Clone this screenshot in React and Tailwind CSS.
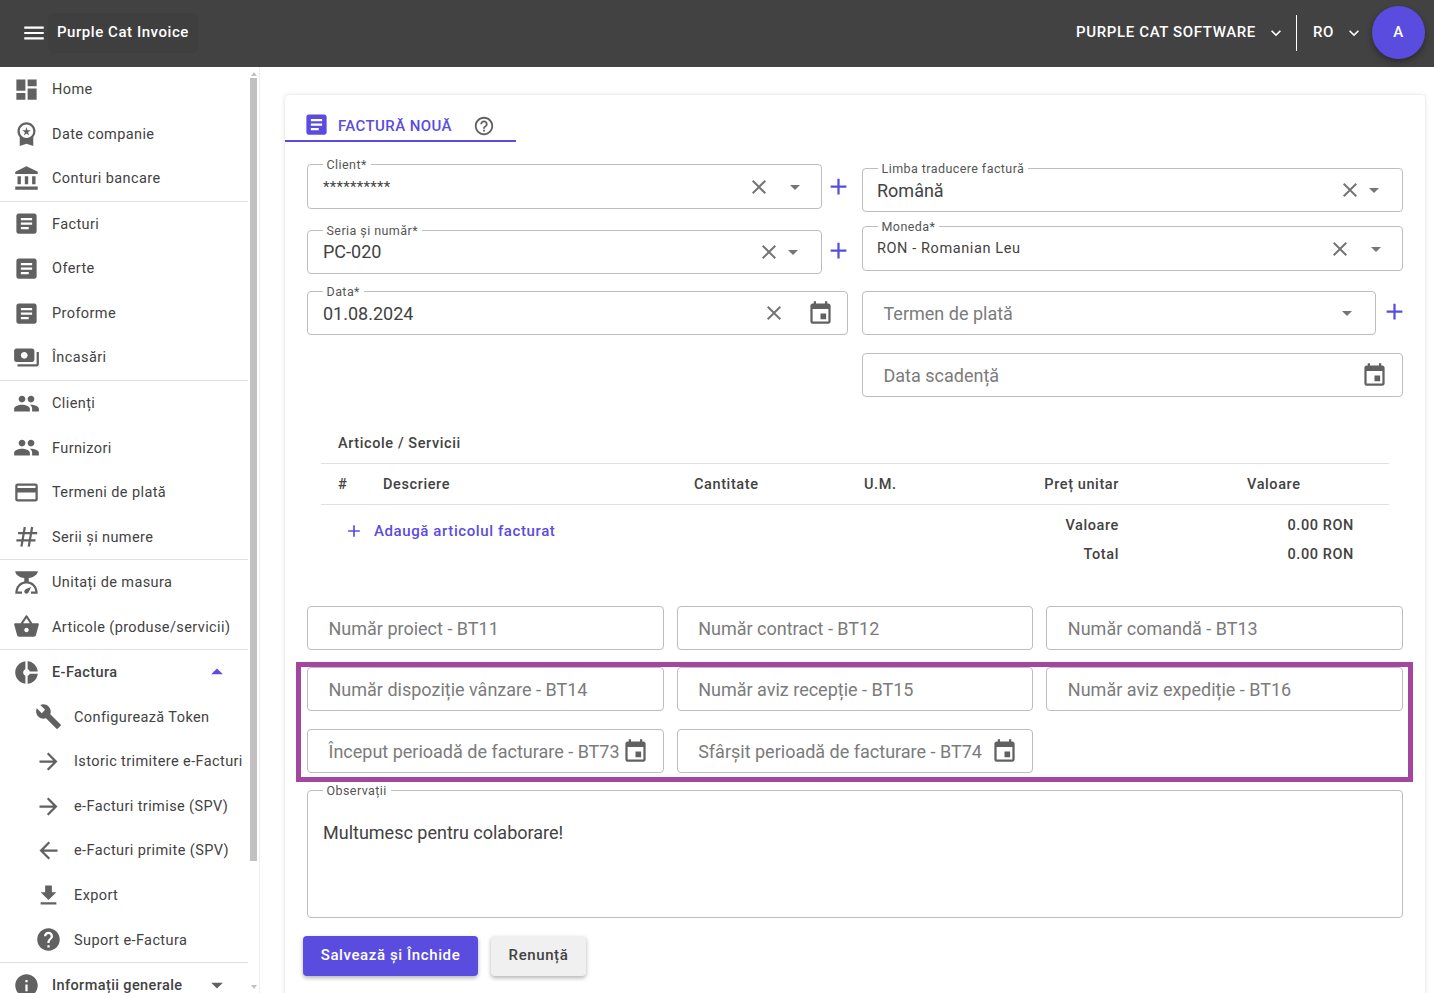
import React from 'react';
import {
  MdMenu, MdKeyboardArrowDown, MdDashboard, MdWorkspacePremium, MdAccountBalance, MdArticle, MdPayments,
  MdPeople, MdCreditCard, MdScale, MdShoppingBasket, MdDonutSmall, MdArrowDropUp, MdArrowDropDown,
  MdBuild, MdArrowForward, MdArrowBack, MdFileDownload, MdHelp, MdInfo, MdClose, MdAdd, MdEvent, MdHelpOutline,
} from 'react-icons/md';

// slanted, thin hash from the reference menu
const HashIcon = ({ size, className }) => (
  <svg width={size} height={size} viewBox="0 0 24 24" className={className} fill="none" stroke="currentColor" strokeWidth="2">
    <path d="M10.5 3.5L7.5 21M17 3.5L14 21M4.5 9H21.5M3 15.5H20" />
  </svg>
);

const MENU = [
  [
    { label: 'Home', Icon: MdDashboard },
    { label: 'Date companie', Icon: MdWorkspacePremium },
    { label: 'Conturi bancare', Icon: MdAccountBalance },
  ],
  [
    { label: 'Facturi', Icon: MdArticle },
    { label: 'Oferte', Icon: MdArticle },
    { label: 'Proforme', Icon: MdArticle },
    { label: 'Încasări', Icon: MdPayments },
  ],
  [
    { label: 'Clienți', Icon: MdPeople },
    { label: 'Furnizori', Icon: MdPeople },
    { label: 'Termeni de plată', Icon: MdCreditCard },
    { label: 'Serii și numere', Icon: HashIcon },
  ],
  [
    { label: 'Unitați de masura', Icon: MdScale },
    { label: 'Articole (produse/servicii)', Icon: MdShoppingBasket },
  ],
  [
    { label: 'E-Factura', Icon: MdDonutSmall, open: true },
    { label: 'Configurează Token', Icon: MdBuild, sub: true },
    { label: 'Istoric trimitere e-Facturi', Icon: MdArrowForward, sub: true },
    { label: 'e-Facturi trimise (SPV)', Icon: MdArrowForward, sub: true },
    { label: 'e-Facturi primite (SPV)', Icon: MdArrowBack, sub: true },
    { label: 'Export', Icon: MdFileDownload, sub: true },
    { label: 'Suport e-Factura', Icon: MdHelp, sub: true },
  ],
  [{ label: 'Informații generale', Icon: MdInfo, closed: true }],
];

const MenuRow = ({ item }) => {
  const { label, Icon, sub, open, closed } = item;
  return (
    <div className={`flex h-[44.55px] items-center ${sub ? 'pl-[35px]' : 'pl-[13px]'}`}>
      <Icon size={27} className="shrink-0 text-[#616161]" />
      <span className={`ml-[12px] mt-[1.6px] whitespace-nowrap text-[14.5px] tracking-[0.4px] text-[#424242] ${open || closed ? 'font-medium' : ''}`}>{label}</span>
      {open && <MdArrowDropUp size={28} className="ml-auto mr-[17px] text-[#5b4ce0]" />}
      {closed && <MdArrowDropDown size={28} className="ml-auto mr-[17px] text-[#616161]" />}
    </div>
  );
};

const Sidebar = () => (
  <aside className="flex w-[260px] shrink-0 overflow-hidden border-r border-[#eeeeee]">
    <nav className="w-[248px] shrink-0">
      {MENU.map((group, i) => (
        <div key={i} className={i < MENU.length - 1 ? 'border-b border-[#e0e0e0]' : ''}>
          {group.map(item => <MenuRow key={item.label} item={item} />)}
        </div>
      ))}
    </nav>
    <div className="flex w-[7px] ml-[2px] flex-col items-center">
      <div className="mt-[5px] h-0 w-0 border-x-[3px] border-b-[4px] border-x-transparent border-b-[#c1c1c1]" />
      <div className="mt-[2px] h-[783px] w-full bg-[#c1c1c1]" />
      <div className="mt-[124px] h-0 w-0 border-x-[3px] border-t-[4px] border-x-transparent border-t-[#c1c1c1]" />
    </div>
  </aside>
);

const FieldLabel = ({ children }) => (
  <span className="absolute -top-[7px] left-[14.5px] bg-white px-1 text-[12.5px] leading-[14px] tracking-[0.43px] text-[#555555]">{children}</span>
);

// outlined input, the label sits on top of the border
const Field = ({ label, value, valueClass = 'pl-[15px] text-[18px]', placeholder, className = '', children }) => (
  <div className={`relative flex h-[44px] items-center rounded border border-[#bdbdbd] ${className}`}>
    {label && <FieldLabel>{label}</FieldLabel>}
    {value && <span className={`text-[#424242] ${valueClass}`}>{value}</span>}
    {placeholder && <span className="whitespace-nowrap pl-[20.5px] text-[18px] text-[#7b7b7b]">{placeholder}</span>}
    {children}
  </div>
);

const Clear = ({ className = '' }) => <MdClose size={24} className={`shrink-0 text-[#757575] ${className}`} />;
const Drop = ({ className = '' }) => <MdArrowDropDown size={24} className={`shrink-0 text-[#757575] ${className}`} />;
const Cal = ({ className = '' }) => <MdEvent size={27} className={`shrink-0 text-[#616161] ${className}`} />;
const Plus = ({ className = '' }) => <MdAdd size={27} className={`shrink-0 text-[#5b4ce0] ${className}`} />;

const TopBar = () => (
  <header className="flex h-[67px] shrink-0 items-center bg-[#424242] pb-[2px] text-white">
    <MdMenu size={26} className="ml-[21px] shrink-0" />
    <div className="ml-[1px] flex h-[40px] w-[150px] items-center rounded-md bg-[#3f3f3f] pl-[9px] text-[15px] font-medium tracking-[0.55px]">Purple Cat Invoice</div>
    <div className="ml-auto flex items-center text-[15px] font-medium tracking-[0.63px]">
      <span>PURPLE CAT SOFTWARE</span>
      <MdKeyboardArrowDown size={20} className="ml-[10px]" />
      <div className="ml-[10px] h-[36px] w-px bg-white" />
      <span className="ml-[16px]">RO</span>
      <MdKeyboardArrowDown size={20} className="ml-[10px]" />
      <div className="mb-[1px] ml-[8px] mr-[9px] flex h-[53px] w-[53px] items-center justify-center rounded-full bg-[#5b4ce0] shadow-[0_3px_6px_rgba(0,0,0,0.35)]">A</div>
    </div>
  </header>
);

const FormHead = () => (
  <div className="flex gap-[14px] px-[22px] pt-[22px]">
    <div className="w-[541px] shrink-0">
      <div className="flex items-center">
        <Field label="Client*" value="**********" valueClass="mt-[2px] pl-[15px] text-[15px] tracking-[0.3px]" className="h-[45px] w-[515px] shrink-0">
          <Clear className="ml-auto" />
          <Drop className="ml-[12px] mr-[14px]" />
        </Field>
        <Plus className="mb-[1px] ml-[3px]" />
      </div>
      <div className="mt-[21px] flex items-center">
        <Field label="Seria și număr*" value="PC-020" valueClass="mb-[2px] pl-[15px] text-[18px]" className="w-[515px] shrink-0">
          <Clear className="ml-auto" />
          <Drop className="mr-[16px]" />
        </Field>
        <Plus className="mb-[4px] ml-[3px]" />
      </div>
      <Field label="Data*" value="01.08.2024" className="mt-[17px]">
        <Clear className="ml-auto" />
        <Cal className="ml-[21px] mr-[13px]" />
      </Field>
    </div>
    <div className="min-w-0 flex-1 pt-[4px]">
      <Field label="Limba traducere factură" value="Română" valueClass="pl-[14px] text-[18px]">
        <Clear className="ml-auto" />
        <Drop className="mr-[16px]" />
      </Field>
      <Field label="Moneda*" value="RON - Romanian Leu" valueClass="pl-[14px] text-[14.5px] tracking-[0.6px]" className="mt-[14px] h-[45px]">
        <Clear className="ml-auto" />
        <Drop className="ml-[12px] mr-[14px]" />
      </Field>
      <div className="mt-[20px] flex items-center">
        <Field placeholder="Termen de plată" className="w-[514px] shrink-0">
          <Drop className="ml-auto mr-[16px]" />
        </Field>
        <Plus className="mb-[3px] ml-[5px]" />
      </div>
      <Field placeholder="Data scadență" className="mt-[18px]">
        <Cal className="ml-auto mr-[14px]" />
      </Field>
    </div>
  </div>
);

const Articles = () => (
  <div className="mx-[36px] mt-[27px] text-[14.5px] font-medium tracking-[0.6px] text-[#424242]">
    <div className="flex h-[40px] items-center border-b border-[#e0e0e0] pl-[17px]">Articole / Servicii</div>
    <div className="grid h-[41px] grid-cols-[62px_311px_170px_100px_155px_1fr] items-center border-b border-[#e0e0e0] pt-[2px]">
      <span className="pl-[17px]">#</span>
      <span>Descriere</span>
      <span>Cantitate</span>
      <span>U.M.</span>
      <span className="text-right">Preț unitar</span>
      <span className="pl-[128px]">Valoare</span>
    </div>
    <div className="flex justify-between pr-[35px] pt-[6px]">
      <div className="flex h-[40px] items-center text-[15px] text-[#5b4ce0]">
        <MdAdd size={20} className="ml-[23px]" />
        <span className="ml-[10px]">Adaugă articolul facturat</span>
      </div>
      <div className="grid grid-cols-[auto_235px] grid-rows-[29px_29px] items-center text-right">
        <span>Valoare</span>
        <span>0.00 RON</span>
        <span>Total</span>
        <span>0.00 RON</span>
      </div>
    </div>
  </div>
);

const Refs = () => (
  <div className="relative mx-[22px] mt-[37px]">
    <div className="grid grid-cols-3 gap-x-[13px] gap-y-[17px]">
      <Field placeholder="Număr proiect - BT11" />
      <Field placeholder="Număr contract - BT12" />
      <Field placeholder="Număr comandă - BT13" />
      <Field placeholder="Număr dispoziție vânzare - BT14" />
      <Field placeholder="Număr aviz recepție - BT15" />
      <Field placeholder="Număr aviz expediție - BT16" />
      <Field placeholder="Început perioadă de facturare - BT73" className="mt-px">
        <Cal className="ml-auto mr-[14px]" />
      </Field>
      <Field placeholder="Sfârșit perioadă de facturare - BT74" className="mt-px">
        <Cal className="ml-auto mr-[14px]" />
      </Field>
    </div>
    {/* annotation frame from the screenshot */}
    <div className="pointer-events-none absolute -left-[11px] -right-[10px] top-[56px] h-[120px] border-[5px] border-[#a445a0]" />
  </div>
);

const Notes = () => (
  <div className="relative mx-[22px] mt-[17px] h-[128px] rounded border border-[#bdbdbd] pl-[15px] pt-[28px] text-[18px] text-[#424242]">
    <FieldLabel>Observații</FieldLabel>
    Multumesc pentru colaborare!
  </div>
);

const Actions = () => (
  <div className="ml-[18px] mt-[18px] flex gap-[13px] text-[15px] font-medium tracking-[0.6px]">
    <button className="h-[40px] w-[175px] rounded bg-[#5b4ce0] pb-[2px] text-white shadow-[0_2px_4px_rgba(0,0,0,0.3)]">Salvează și Închide</button>
    <button className="h-[40px] w-[95px] rounded bg-[#f0f0f0] pb-[2px] text-[#424242] shadow-[0_2px_4px_rgba(0,0,0,0.3)]">Renunță</button>
  </div>
);

const App = () => (
  <div className="flex h-screen flex-col overflow-hidden bg-white font-['Roboto',sans-serif]">
    <TopBar />
    <div className="flex min-h-0 flex-1">
      <Sidebar />
      <main className="min-w-0 flex-1 pl-[25px] pr-[9px] pt-[28px]">
        <div className="h-[920px] rounded bg-white shadow-[0_0_4px_rgba(0,0,0,0.15)]">
          <div className="flex h-[47px] w-[231px] items-end border-b-2 border-[#5b4ce0] pb-[2px] pl-[18px] text-[15px] font-medium tracking-[0.4px] text-[#5b4ce0]">
            <MdArticle size={27} className="shrink-0" />
            <span className="ml-[8px] mb-[1px]">FACTURĂ NOUĂ</span>
            <MdHelpOutline size={22} className="ml-[21px] mb-[1px] shrink-0 text-[#616161]" />
          </div>
          <FormHead />
          <Articles />
          <Refs />
          <Notes />
          <Actions />
        </div>
      </main>
    </div>
  </div>
);

export default App;
